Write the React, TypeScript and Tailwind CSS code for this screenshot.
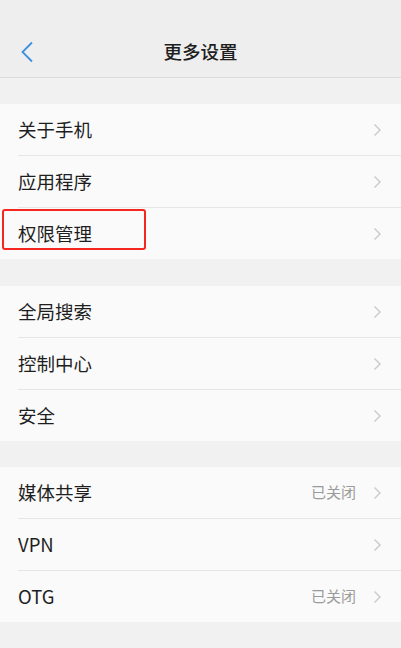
import { Fragment } from 'react';

type Item = { label: string; value?: string; highlight?: boolean };

const groups: Item[][] = [
  [{ label: '关于手机' }, { label: '应用程序' }, { label: '权限管理', highlight: true }],
  [{ label: '全局搜索' }, { label: '控制中心' }, { label: '安全' }],
  [{ label: '媒体共享', value: '已关闭' }, { label: 'VPN' }, { label: 'OTG', value: '已关闭' }],
];

const font = { fontFamily: '"Noto Sans CJK SC", "Noto Sans", sans-serif' };

function Chevron() {
  return (
    <svg width="9" height="14" viewBox="0 0 9 14" fill="none" className="shrink-0">
      <path d="M1.5 1.5 L7 7 L1.5 12.5" stroke="#c9c9c9" strokeWidth="1.4" />
    </svg>
  );
}

function Row({ item, last }: { item: Item; last: boolean }) {
  return (
    <div className="relative flex h-[51px] items-center pl-[18px] pr-[19px]">
      <span className="flex-1 text-[18.5px] text-[#1e1e1e]">{item.label}</span>
      {item.value && <span className="mr-[17px] text-[15px] text-[#9a9a9a]">{item.value}</span>}
      <Chevron />
      {item.highlight && (
        <div className="absolute left-[2px] top-[1px] h-[41px] w-[144px] rounded-[3px] border-2 border-[#f5261f]" />
      )}
      {!last && <div className="absolute bottom-[-1px] left-[18px] right-0 h-px bg-[#e6e6e6]" />}
    </div>
  );
}

export default function App() {
  return (
    <div className="min-h-[648px] w-full bg-[#f1f1f1]" style={font}>
      {/* Header */}
      <div className="relative flex h-[78px] items-center justify-center border-b border-[#dcdcdc] bg-[#eeeeee] pt-[26px]">
        <svg width="14" height="22" viewBox="0 0 14 22" fill="none" className="absolute left-[20px] top-[41px]">
          <path d="M12 1.5 L2.5 11 L12 20.5" stroke="#3d8fe0" strokeWidth="1.8" />
        </svg>
        <span className="text-[18.5px] font-medium text-[#1e1e1e]">更多设置</span>
      </div>

      {groups.map((group, gi) => (
        <Fragment key={gi}>
          <div className={gi === 1 ? 'h-[27px]' : 'h-[26px]'} />
          <div className="flex flex-col gap-px bg-[#fafafa]">
            {group.map((item, i) => (
              <Row key={item.label} item={item} last={i === group.length - 1} />
            ))}
          </div>
        </Fragment>
      ))}
    </div>
  );
}
